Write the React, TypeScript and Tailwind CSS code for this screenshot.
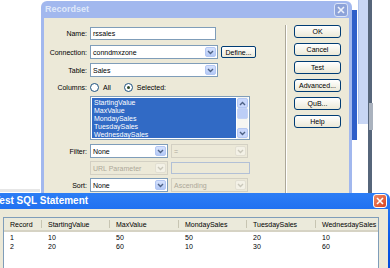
import type { ReactNode } from 'react'

const Chevron = ({ disabled }: { disabled?: boolean }) => (
  <div
    className={
      disabled
        ? 'w-[11px] self-stretch m-[1px] rounded-[2px] border border-[#e2dfd2] bg-[#f3f1e6] flex items-center justify-center'
        : 'w-[11px] self-stretch m-[1px] rounded-[2px] border border-[#b3c7f3] bg-gradient-to-b from-[#d6e2fd] to-[#b4c9f6] flex items-center justify-center'
    }
  >
    <svg width="7" height="5" viewBox="0 0 7 5">
      <path d="M1 1 L3.5 3.5 L6 1" fill="none" stroke={disabled ? '#c9c7ba' : '#4d6185'} strokeWidth="1.4" />
    </svg>
  </div>
)

const Select = ({ value, width, disabled }: { value: string; width: string; disabled?: boolean }) => (
  <div
    className={`${width} h-full flex border ${
      disabled ? 'border-[#d3d0c3] bg-[#ece9d8] text-[#aca899]' : 'border-[#7f9db9] bg-white text-black'
    }`}
  >
    <div className="flex-1 flex items-center pl-[2px] leading-none">{value}</div>
    <Chevron disabled={disabled} />
  </div>
)

const Row = ({ label, h, mt, children }: { label: string; h: string; mt: string; children: ReactNode }) => (
  <div className={`flex items-center ${h} ${mt}`}>
    <div className="w-[43px] text-right leading-none">{label}</div>
    <div className="ml-[3px] h-full flex items-center gap-[3px]">{children}</div>
  </div>
)

const Btn = ({ label, w = 'w-[47px]' }: { label: string; w?: string }) => (
  <div
    className={`${w} h-[13px] rounded-[3px] border border-[#003c74] bg-gradient-to-b from-white to-[#ece9d8] flex items-center justify-center leading-none`}
  >
    {label}
  </div>
)

const Radio = ({ on }: { on?: boolean }) => (
  <div className="w-[9px] h-[9px] rounded-full border border-[#1c5180] bg-white flex items-center justify-center">
    {on && <div className="w-[3px] h-[3px] rounded-full bg-[#2c4a2c]" />}
  </div>
)

const columns = ['StartingValue', 'MaxValue', 'MondaySales', 'TuesdaySales', 'WednesdaySales']
const headers = ['Record', ...columns]
const rows = [
  ['1', '10', '50', '50', '20', '10'],
  ['2', '20', '60', '10', '30', '60'],
]

export default function App() {
  return (
    <div className="relative w-[390px] h-[268px] overflow-hidden bg-white font-['Liberation_Sans',Arial,sans-serif] text-[7px] text-black">
      {/* windows behind */}
      <div className="absolute left-[349px] top-[10px] w-[8px] h-[130px] bg-[#2f5fc9]" />
      <div className="absolute left-[358px] top-0 w-[10px] h-[124px] bg-[#c8d6f4] border-l border-[#b0c3ec]" />
      <div className="absolute left-[368px] top-0 w-[4px] h-[268px] bg-[#56657a]" />
      <div className="absolute left-[369px] top-[103px] w-[4px] h-[27px] bg-[#aab2be]" />
      <div className="absolute left-0 top-[189px] w-[40px] h-[3px] bg-[#e6e6e6]" />

      {/* Recordset dialog */}
      <div className="absolute left-[41px] top-[1px] w-[311px] h-[200px] flex flex-col rounded-t-[6px] bg-[#a2b8ee] px-[3px]">
        <div className="h-[17px] flex items-center justify-between">
          <span className="pl-[1px] text-[9px] font-bold text-[#dfe8fa] leading-none">Recordset</span>
          <div className="w-[14px] h-[14px] mr-[1px] rounded-[3px] border border-[#dbe4f7] bg-[#8da3d9] flex items-center justify-center">
            <svg width="8" height="8" viewBox="0 0 8 8">
              <path d="M1 1 L7 7 M7 1 L1 7" stroke="#eef2fb" strokeWidth="1.6" />
            </svg>
          </div>
        </div>
        <div className="flex-1 flex bg-[#ece9d8]">
          <div className="w-[241px] flex flex-col pt-[9px]">
            <Row label="Name:" h="h-[13px]" mt="mt-0">
              <div className="w-[126px] h-full border border-[#7f9db9] bg-white flex items-center pl-[2px] leading-none">rssales</div>
            </Row>
            <Row label="Connection:" h="h-[14px]" mt="mt-[5px]">
              <Select value="conndmxzone" width="w-[128px]" />
              <div className="w-[35px] h-[12px] rounded-[2px] border border-[#003c74] bg-gradient-to-b from-white to-[#ece9d8] flex items-center justify-center leading-none">
                Define...
              </div>
            </Row>
            <Row label="Table:" h="h-[14px]" mt="mt-[4px]">
              <Select value="Sales" width="w-[128px]" />
            </Row>
            <Row label="Columns:" h="h-[9px]" mt="mt-[6px]">
              <Radio />
              <span className="ml-[1px] leading-none">All</span>
              <div className="ml-[10px]">
                <Radio on />
              </div>
              <span className="ml-[1px] leading-none">Selected:</span>
            </Row>
            <div className="ml-[46px] mt-[4px] w-[160px] h-[44px] flex border border-[#7f9db9] bg-white">
              <div className="flex-1 m-[1px] bg-[#316ac5] text-white flex flex-col pl-[2px] pt-[1px]">
                {columns.map((c) => (
                  <div key={c} className="h-[8px] leading-[8px]">
                    {c}
                  </div>
                ))}
              </div>
              <div className="w-[11px] flex flex-col bg-[#f6f6f2] py-[1px] mr-[1px]">
                <div className="h-[10px] rounded-[2px] border border-[#b3c7f3] bg-[#c8d7fb] flex items-center justify-center">
                  <svg width="7" height="5" viewBox="0 0 7 5">
                    <path d="M1 4 L3.5 1.5 L6 4" fill="none" stroke="#4d6185" strokeWidth="1.4" />
                  </svg>
                </div>
                <div className="h-[11px] rounded-[2px] border border-[#c4d3f5] bg-[#bccef7]" />
                <div className="flex-1" />
                <div className="h-[10px] rounded-[2px] border border-[#b3c7f3] bg-[#c8d7fb] flex items-center justify-center">
                  <svg width="7" height="5" viewBox="0 0 7 5">
                    <path d="M1 1 L3.5 3.5 L6 1" fill="none" stroke="#4d6185" strokeWidth="1.4" />
                  </svg>
                </div>
              </div>
            </div>
            <Row label="Filter:" h="h-[14px]" mt="mt-[4px]">
              <Select value="None" width="w-[78px]" />
              <Select value="=" width="w-[77px]" disabled />
            </Row>
            <Row label="" h="h-[14px]" mt="mt-[3px]">
              <Select value="URL Parameter" width="w-[78px]" disabled />
              <div className="w-[79px] h-[12px] border border-[#b2c0d6] bg-[#ece9d8]" />
            </Row>
            <Row label="Sort:" h="h-[14px]" mt="mt-[3px]">
              <Select value="None" width="w-[78px]" />
              <Select value="Ascending" width="w-[77px]" disabled />
            </Row>
          </div>
          <div className="mt-[7px] w-[2px] flex border-l border-[#aca899] bg-white" />
          <div className="ml-[7px] pt-[7px] flex flex-col gap-[5px]">
            <Btn label="OK" />
            <Btn label="Cancel" />
            <Btn label="Test" />
            <Btn label="Advanced..." />
            <Btn label="QuB..." />
            <Btn label="Help" />
          </div>
        </div>
      </div>

      {/* Test SQL Statement window */}
      <div className="absolute left-[-8px] top-[193px] w-[398px] h-[90px] flex flex-col rounded-t-[6px] bg-gradient-to-b from-[#2c7df5] via-[#0a5ae8] to-[#0045d6] pr-[2px]">
        <div className="h-[16px] flex items-center justify-between">
          <span className="pl-[2px] text-[10px] font-bold text-white leading-none">Test SQL Statement</span>
          <div className="w-[14px] h-[14px] mr-[1px] rounded-[3px] border border-white bg-gradient-to-br from-[#f08a64] to-[#d8401c] flex items-center justify-center">
            <svg width="8" height="8" viewBox="0 0 8 8">
              <path d="M1 1 L7 7 M7 1 L1 7" stroke="white" strokeWidth="1.6" />
            </svg>
          </div>
        </div>
        <div className="flex-1 bg-[#ece9d8] pl-[11px] pr-[9px] pt-[8px]">
          <div className="h-full border border-[#7f9db9] bg-white">
            <div className="grid grid-cols-[38px_68px_69px_68px_69px_1fr] h-[14px] bg-[#ebeadb] border-b-2 border-[#d6d3c4]">
              {headers.map((h, i) => (
                <div key={h} className={`flex items-center leading-none pl-[6px] ${i < 5 ? 'border-r border-[#c7c5b2] my-[2px]' : ''}`}>
                  {h}
                </div>
              ))}
            </div>
            <div className="pt-[1px]">
              {rows.map((r) => (
                <div key={r[0]} className="grid grid-cols-[38px_68px_69px_68px_69px_1fr] h-[9px]">
                  {r.map((v, i) => (
                    <div key={i} className="pl-[6px] leading-[9px]">
                      {v}
                    </div>
                  ))}
                </div>
              ))}
            </div>
          </div>
        </div>
      </div>
    </div>
  )
}
